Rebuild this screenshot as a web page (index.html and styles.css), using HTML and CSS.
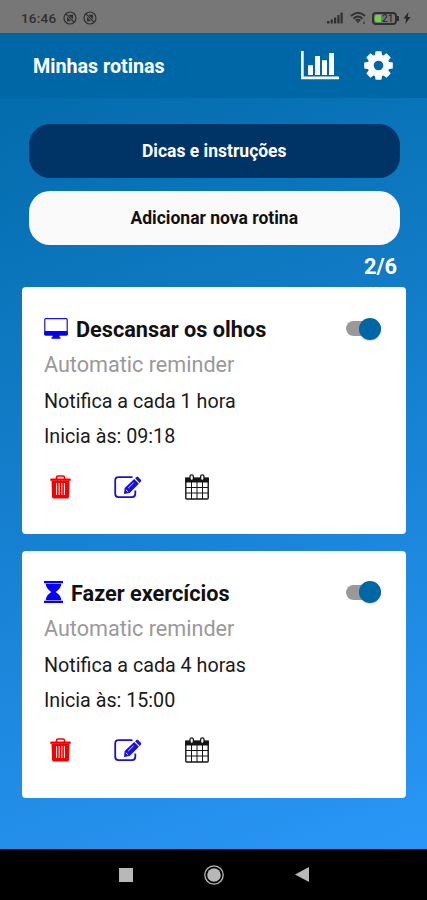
FILE: index.html
```html
<!DOCTYPE html>
<html lang="pt-BR">

<head>
    <meta charset="utf-8">
    <title>Minhas rotinas</title>
    <link rel="stylesheet" href="styles.css">
</head>

<body>
    <svg class="defs">
        <symbol id="muted" viewBox="0 0 14 14">
            <circle cx="7" cy="7" r="6" fill="none" stroke="currentColor" stroke-width="1.2" />
            <path d="M3.2 3.2L10.800 10.800" stroke="currentColor" stroke-width="1.2" />
            <path d="M5.2 3.700h4.900v4.500zM4 6l4.200 4.200H4z" fill="currentColor" />
        </symbol>
        <symbol id="trash" viewBox="0 0 21 24">
            <path d="M6.500 4V2.600Q6.500 1 8.100 1H12.900Q14.500 1 14.500 2.600V4" fill="none" stroke="currentColor" stroke-width="1.6" />
            <path d="M1.500 3.500h18a1.300 1.300 0 0 1 1.300 1.300v.9H.2v-.9A1.300 1.300 0 0 1 1.500 3.500z" fill="currentColor" />
            <path d="M1.500 5.500h18l-.5 16.200a2 2 0 0 1-2 1.900H4a2 2 0 0 1-2-1.900z" fill="currentColor" />
            <path d="M6.600 8v12M9.200 8v12M11.800 8v12M14.400 8v12" stroke="#fff" stroke-width="1" />
        </symbol>
        <symbol id="edit" viewBox="0 0 28 24">
            <path d="M18.500 2.200H4.500Q1.200 2.200 1.200 5.500V18.800Q1.200 22.100 4.500 22.100H18Q21.300 22.100 21.300 18.800V15.500" fill="none" stroke="currentColor" stroke-width="1.800" />
            <path d="M10 19l.6-6L20.200 4l4.700 4.800-9.300 9.200z" fill="currentColor" />
            <path d="M21.100 3.200l1.300-1.200q.8-.8 1.700 0l2.800 2.700q.8.800 0 1.700l-1.200 1.500z" fill="currentColor" />
            <path d="M14.200 13l5.300-5.200M11.800 14.700l2.300 2.200" stroke="#fff" stroke-width=".8" />
        </symbol>
        <symbol id="calendar" viewBox="0 0 24 26">
            <path d="M.8 4.500h22.400V24q0 1-1 1H1.800q-1 0-1-1z" fill="none" stroke="currentColor" stroke-width="1.400" />
            <path d="M.2 3.500h23.600v5H.2z" fill="currentColor" />
            <path d="M1 13.500h22M1 19h22M6.500 8v17M12 8v17M17.500 8v17" stroke="currentColor" stroke-width="1" />
            <rect x="5" y=".8" width="3.400" height="5.700" rx="1.700" fill="#fff" stroke="currentColor" stroke-width="1.300" />
            <rect x="15.600" y=".8" width="3.400" height="5.700" rx="1.700" fill="#fff" stroke="currentColor" stroke-width="1.300" />
        </symbol>
    </svg>

    <div class="statusBar">
        <span class="clock">16:46</span>
        <svg class="muteIcon"><use href="#muted" /></svg>
        <svg class="muteIcon"><use href="#muted" /></svg>
        <div class="statusRight">
            <svg width="17" height="12" viewBox="0 0 17 12" fill="#303030">
                <path d="M0 9h2.500v2.500H0zM3.700 7.500h2.200v4H3.700zM7 5.500h2.200v6H7zM10.300 3h2.200v8.500h-2.200zM13.500 .5h2.200v11h-2.200z" />
            </svg>
            <svg class="wifi" width="17" height="14" viewBox="0 0 17 14" fill="none" stroke="#303030">
                <path d="M1 5Q8 -1.500 15 5M3.500 7.700Q8 3.500 12.500 7.700M5.700 9.700Q8 7.800 10.300 9.700" stroke-width="1.900" />
                <path d="M6.500 10.300h3L8 12.500z" fill="#303030" stroke="none" />
                <path d="M14 10.500v2.500" stroke-width="1.200" />
            </svg>
            <div class="battery"><span class="charge"></span>21</div>
            <svg class="bolt" width="8" height="12" viewBox="0 0 8 12" fill="#262626">
                <path d="M5.500 0L.5 6.500h2.800L2.200 12l5.300-7H4.600z" />
            </svg>
        </div>
    </div>

    <div class="header">
        <h1 class="pageTitle">Minhas rotinas</h1>
        <svg class="chartIcon" width="38" height="30" viewBox="0 0 38 30" fill="#fff">
            <path d="M0 1h2.700v25.500H38v2.700H0z" />
            <path d="M7 15.300h5V25H7zM14 6h5v19h-5zM21 10.300h5V25h-5zM28 3h5v22h-5z" />
        </svg>
        <svg class="gearIcon" width="29" height="29" viewBox="-14.500 -14.500 29 29">
            <g fill="#fff">
                <path id="tooth" d="M-3.800 -9L-2.900 -14.300H2.900L3.800 -9V9L2.900 14.300H-2.900L-3.800 9z" />
                <use href="#tooth" transform="rotate(45)" />
                <use href="#tooth" transform="rotate(90)" />
                <use href="#tooth" transform="rotate(135)" />
                <circle r="10.900" />
            </g>
            <circle r="4.800" fill="#0067a6" />
        </svg>
    </div>

    <div class="content">
        <div class="btn btnDark">Dicas e instruções</div>
        <div class="btn btnLight">Adicionar nova rotina</div>
        <div class="counter">2/6</div>

        <div class="card">
            <div class="cardTop">
                <svg class="cardIcon" width="24" height="21" viewBox="0 0 24 21">
                    <rect x=".8" y=".7" width="22.400" height="16.300" rx="1" fill="none" stroke="#1a12e6" stroke-width="1.200" />
                    <path d="M.3 13h23.400v3.300q0 1.200-1.200 1.200H15.500v1.700h1v1.500h-9v-1.500h1v-1.700H1.500Q.3 17.500.3 16.300z" fill="#0a00f0" />
                </svg>
                <h2 class="cardTitle">Descansar os olhos</h2>
                <div class="toggle"></div>
            </div>
            <p class="kind">Automatic reminder</p>
            <p class="info">Notifica a cada 1 hora</p>
            <p class="info">Inicia às: 09:18</p>
            <div class="actions">
                <svg class="trash"><use href="#trash" /></svg>
                <svg class="edit"><use href="#edit" /></svg>
                <svg class="calendar"><use href="#calendar" /></svg>
            </div>
        </div>

        <div class="card">
            <div class="cardTop">
                <svg class="cardIcon" width="19" height="22" viewBox="0 0 19 22" fill="#0a00f0">
                    <path d="M0 0h19v2.300H0zM0 19.700h19V22H0z" />
                    <path d="M1.700 2.800h15.600q-.5 5.200-5.600 8.200 5.100 3 5.600 8.200H1.700q.5-5.200 5.600-8.200Q2.200 8 1.700 2.800z" />
                </svg>
                <h2 class="cardTitle">Fazer exercícios</h2>
                <div class="toggle"></div>
            </div>
            <p class="kind">Automatic reminder</p>
            <p class="info">Notifica a cada 4 horas</p>
            <p class="info">Inicia às: 15:00</p>
            <div class="actions">
                <svg class="trash"><use href="#trash" /></svg>
                <svg class="edit"><use href="#edit" /></svg>
                <svg class="calendar"><use href="#calendar" /></svg>
            </div>
        </div>
    </div>

    <div class="navBar">
        <svg width="14" height="14"><rect width="14" height="14" fill="#b8b8b8" /></svg>
        <svg width="20" height="20" viewBox="0 0 20 20">
            <circle cx="10" cy="10" r="9.200" fill="none" stroke="#b8b8b8" stroke-width="1.300" />
            <circle cx="10" cy="10" r="6.800" fill="#b8b8b8" />
        </svg>
        <svg width="14" height="15"><path d="M14 0v15L0 7.500z" fill="#b8b8b8" /></svg>
    </div>
</body>

</html>
```
FILE: styles.css
```css
* {
    box-sizing: border-box;
}

body {
    margin: 0;
    height: 900px;
    display: flex;
    flex-direction: column;
    overflow: hidden;
    font-family: Roboto, "Liberation Sans", sans-serif;
    background-color: #000;
}

h1,
h2,
p {
    margin: 0;
}

svg {
    flex: none;
    display: block;
}

.defs {
    position: absolute;
    width: 0;
    height: 0;
}

.statusBar {
    display: flex;
    align-items: center;
    height: 33px;
    padding: 3px 16px 0 21px;
    background-color: #777;
    color: #303030;
}

.clock {
    width: 42px;
    font-size: 13.5px;
    font-weight: 500;
    letter-spacing: .2px;
}

.muteIcon {
    width: 14px;
    height: 14px;
    margin-right: 6px;
}

.statusRight {
    display: flex;
    align-items: center;
    margin-left: auto;
}

.wifi {
    margin-left: 6px;
}

.battery {
    position: relative;
    width: 25px;
    height: 13px;
    margin-left: 5px;
    padding-left: 8px;
    border: 2px solid #303030;
    border-radius: 4px;
    font-size: 10px;
    font-weight: 500;
    line-height: 10px;
}

.battery::after {
    content: "";
    position: absolute;
    top: 2px;
    right: -4px;
    width: 2px;
    height: 5px;
    background-color: #303030;
}

.charge {
    position: absolute;
    top: 1px;
    left: 1px;
    width: 6px;
    height: 7px;
    border-radius: 2px 0 0 2px;
    background-color: #67d93d;
}

.bolt {
    margin-left: 6px;
}

.header {
    display: flex;
    align-items: center;
    height: 65px;
    padding: 0 34px 0 33px;
    background-color: #0067a6;
    color: #fff;
}

.pageTitle {
    flex: 1;
    padding-top: 2px;
    font-size: 19.7px;
    font-weight: 700;
}

.chartIcon {
    margin-bottom: 1px;
}

.gearIcon {
    margin-left: 25px;
}

.content {
    flex: 1;
    padding: 26px 21px 0 22px;
    background: linear-gradient(160deg, #036cac 0%, #2a96f7 100%);
}

.btn {
    height: 54px;
    margin: 0 6px 13px 6.500px;
    border-radius: 21px;
    font-size: 17.5px;
    font-weight: 700;
    line-height: 55px;
    text-align: center;
}

.btnDark {
    background-color: #003366;
    color: #fff;
}

.btnLight {
    margin-bottom: 0;
    background-color: #fafafa;
    color: #111;
}

.counter {
    height: 42px;
    padding-right: 9px;
    color: #fff;
    font-size: 21.8px;
    font-weight: 700;
    line-height: 44px;
    text-align: right;
}

.card {
    height: 247px;
    margin-bottom: 16.500px;
    padding: 25px 25.500px 0 22px;
    border-radius: 4px;
    background-color: #fff;
}

.cardTop {
    display: flex;
    align-items: center;
    height: 35px;
}

.cardIcon {
    margin-bottom: 3px;
}

.cardTitle {
    flex: 1;
    margin-left: 8px;
    color: #111;
    font-size: 21.7px;
    font-weight: 700;
}

.toggle {
    display: flex;
    align-items: center;
    justify-content: flex-end;
    width: 35px;
    height: 15px;
    margin-bottom: 2px;
    border-radius: 8px;
    background-color: #999;
}

.toggle::after {
    content: "";
    flex: none;
    width: 22px;
    height: 22px;
    border-radius: 50%;
    background-color: #0067a6;
    box-shadow: 0 1px 1px rgba(0, 0, 0, .15);
}

.kind {
    color: #999;
    font-size: 21.6px;
    line-height: 35px;
}

.info {
    color: #1a1a1a;
    font-size: 19.700px;
    line-height: 35px;
}

.kind + .info {
    margin-top: 2px;
}

.actions {
    display: flex;
    align-items: center;
    height: 26px;
    margin-top: 19.500px;
    padding-left: 6px;
}

.trash {
    width: 21px;
    height: 24px;
    color: #f50000;
}

.edit {
    width: 28px;
    height: 24px;
    margin-left: 43px;
    color: #1a12dc;
}

.calendar {
    width: 24px;
    height: 26px;
    margin-left: 43px;
    color: #151515;
}

.navBar {
    display: flex;
    align-items: center;
    justify-content: space-between;
    height: 51px;
    padding: 0 118px 0 118.500px;
    background-color: #000;
}
```
